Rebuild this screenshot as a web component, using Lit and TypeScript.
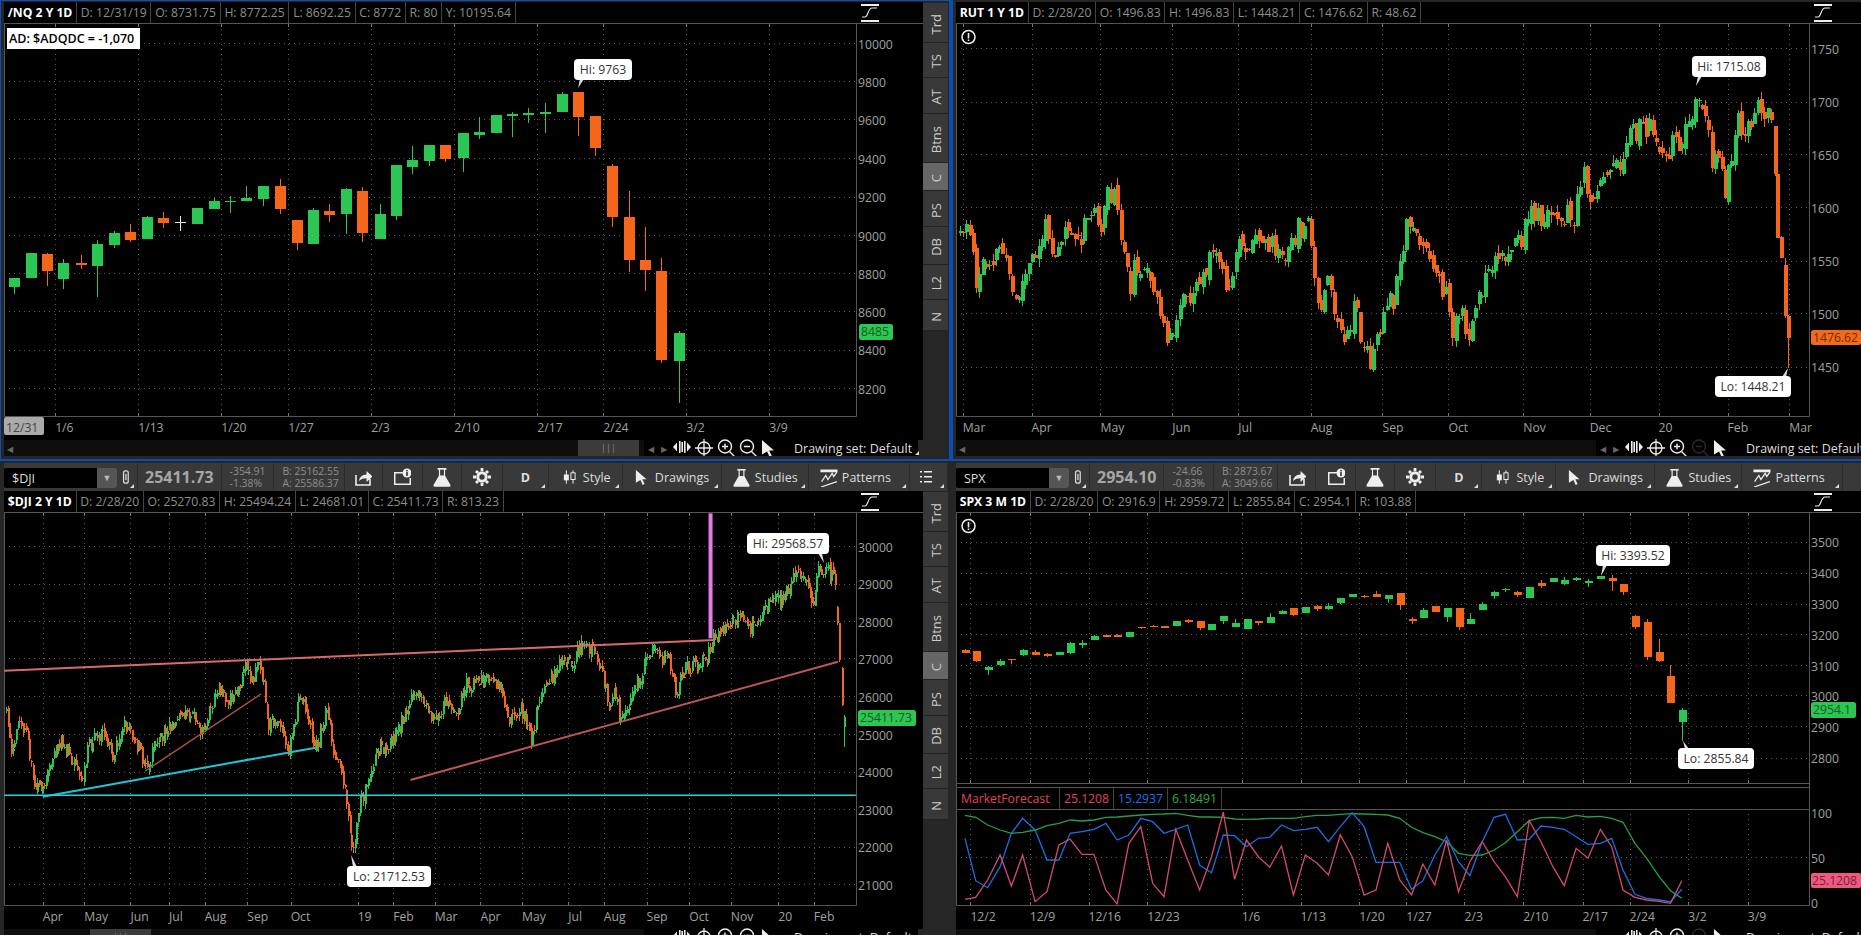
import { LitElement, html, svg, css, nothing } from "lit";
import { customElement, property } from "lit/decorators.js";

type Candle = [number, number, number, number, number, string];
const G = "#2bc653";
const O = "#f5661a";
const W = "#e6e6e6";

// seeded noise so the long charts stay the same between runs
function rng(seed: number) {
  return () => {
    seed = (seed + 0x6d2b79f5) | 0;
    let t = Math.imul(seed ^ (seed >>> 15), 1 | seed);
    t = (t + Math.imul(t ^ (t >>> 7), 61 | t)) ^ t;
    return ((t ^ (t >>> 14)) >>> 0) / 4294967296;
  };
}

function trace(way: number[][], step: number, seed: number, jitter: number, wick: number): Candle[] {
  const r = rng(seed);
  const out: Candle[] = [];
  let seg = 0;
  const last = way[way.length - 1][0];
  let prev = way[0][1];
  for (let x = way[0][0]; x <= last; x += step) {
    while (seg < way.length - 2 && way[seg + 1][0] < x) seg++;
    const [x0, y0] = way[seg];
    const [x1, y1] = way[seg + 1];
    const y = y0 + ((y1 - y0) * (x - x0)) / (x1 - x0) + (r() - 0.5) * jitter;
    const open = prev + (r() - 0.5) * jitter * 0.4;
    const top = Math.min(open, y);
    const bot = Math.max(open, y);
    out.push([x, top - r() * wick, top, Math.max(bot, top + 4), bot + r() * wick, y < open ? G : O]);
    prev = y;
  }
  return out;
}

const nqCandles: Candle[] = [
  [24, 830, 831, 858, 878, G], [52, 756, 756, 831, 831, G], [80, 755, 759, 810, 855, O], [107, 775, 786, 834, 863, G],
  [136, 763, 786, 792, 803, O], [164, 718, 729, 795, 887, G], [192, 690, 696, 732, 740, G], [220, 670, 693, 717, 722, O],
  [247, 645, 648, 714, 714, G], [275, 633, 651, 666, 682, O], [304, 645, 663, 665, 690, W], [332, 621, 621, 669, 669, G],
  [360, 590, 600, 624, 624, G], [387, 585, 600, 603, 635, G], [415, 555, 591, 600, 600, G], [444, 555, 555, 594, 615, G],
  [472, 535, 555, 624, 638, O], [500, 657, 657, 726, 746, O], [527, 621, 627, 729, 729, G], [555, 610, 630, 642, 662, O],
  [584, 562, 564, 639, 700, G], [611, 558, 570, 696, 722, O], [640, 610, 639, 714, 714, G], [667, 491, 491, 645, 658, G],
  [695, 435, 477, 498, 518, G], [724, 432, 432, 480, 495, G], [751, 432, 432, 474, 483, O], [780, 395, 396, 471, 512, G],
  [808, 348, 393, 402, 413, G], [836, 342, 342, 396, 396, G], [864, 333, 339, 345, 407, G], [891, 322, 336, 342, 365, G],
  [919, 305, 333, 339, 395, G], [948, 272, 279, 333, 333, G], [975, 272, 272, 348, 405, O], [1004, 345, 345, 441, 465, O],
  [1031, 490, 495, 648, 678, O], [1060, 570, 648, 777, 812, O], [1088, 678, 777, 807, 870, O], [1115, 771, 810, 1077, 1085, O],
  [1144, 990, 996, 1080, 1205, G],
];

const spxCandles: Candle[] = [
  [59, 568, 570, 578, 580, O], [77, 573, 573, 603, 605, O], [97, 618, 620, 630, 645, G], [118, 598, 603, 615, 617, G],
  [137, 597, 597, 600, 612, O], [156, 568, 570, 585, 587, G], [177, 571, 576, 584, 586, O], [197, 578, 582, 587, 592, O],
  [217, 576, 577, 585, 586, G], [236, 545, 550, 579, 581, G], [256, 540, 550, 554, 564, G], [276, 526, 529, 540, 541, G],
  [296, 524, 526, 530, 531, O], [315, 523, 526, 530, 531, O], [335, 516, 517, 530, 531, G], [355, 500, 502, 504, 507, O],
  [375, 496, 498, 500, 502, O], [394, 497, 499, 503, 504, O], [414, 483, 484, 498, 499, G], [434, 478, 479, 486, 488, O],
  [454, 483, 484, 504, 510, O], [474, 492, 493, 510, 511, G], [494, 468, 469, 484, 492, G], [513, 477, 490, 501, 502, G],
  [533, 477, 478, 507, 508, G], [553, 482, 484, 490, 494, O], [572, 460, 472, 488, 490, G], [592, 451, 453, 461, 463, G],
  [612, 444, 444, 465, 467, O], [632, 441, 442, 459, 460, G], [652, 436, 439, 448, 452, O], [671, 430, 439, 447, 449, G],
  [691, 413, 415, 429, 431, G], [711, 401, 402, 411, 412, G], [731, 404, 407, 410, 414, O], [751, 393, 402, 411, 412, O],
  [771, 404, 406, 416, 430, G], [791, 399, 399, 435, 449, O], [811, 472, 478, 484, 491, O], [830, 445, 450, 474, 475, G],
  [850, 437, 438, 456, 457, O], [870, 444, 445, 471, 485, G], [890, 444, 444, 500, 509, O], [909, 460, 477, 492, 493, G],
  [930, 425, 432, 450, 451, G], [950, 394, 397, 408, 418, G], [969, 384, 387, 390, 396, G], [989, 392, 396, 405, 410, O],
  [1009, 380, 381, 414, 415, G], [1029, 360, 369, 378, 384, O], [1049, 353, 354, 366, 367, G], [1068, 352, 361, 372, 374, G],
  [1088, 352, 354, 359, 362, G], [1108, 356, 364, 369, 380, G], [1129, 347, 348, 356, 358, G], [1148, 345, 354, 362, 392, O],
  [1167, 371, 372, 396, 404, O], [1187, 466, 468, 500, 508, O], [1207, 478, 485, 591, 600, O], [1228, 538, 576, 603, 607, O],
  [1247, 616, 648, 728, 730, O], [1266, 745, 750, 786, 842, G],
];

const rutWay = [
  [50, 690], [60, 650], [68, 720], [78, 860], [88, 790], [105, 765], [120, 730], [130, 790], [142, 915], [155, 850], [175, 760],
  [195, 680], [210, 745], [232, 670], [250, 740], [265, 660], [280, 620], [290, 695], [300, 570], [312, 600], [322, 710], [335, 860],
  [350, 770], [365, 830], [378, 900], [395, 970], [408, 1050], [420, 900], [435, 880], [455, 830], [470, 790], [483, 740], [495, 860],
  [507, 880], [520, 720], [540, 740], [570, 720], [600, 790], [615, 690], [636, 680], [645, 790], [655, 970], [670, 840], [685, 960],
  [698, 1065], [715, 910], [730, 1050], [745, 1080], [760, 950], [780, 900], [790, 830], [800, 690], [815, 680], [830, 740], [850, 830],
  [870, 880], [880, 1000], [893, 930], [903, 1020], [918, 920], [935, 850], [945, 810], [965, 770], [985, 700], [998, 740], [1005, 620],
  [1025, 640], [1048, 660], [1070, 630], [1082, 665], [1092, 550], [1102, 520], [1115, 590], [1125, 590], [1135, 510], [1155, 510],
  [1170, 440], [1185, 400], [1200, 370], [1210, 370], [1222, 420], [1238, 450], [1260, 420], [1277, 360], [1285, 305], [1290, 270],
  [1298, 345], [1310, 345], [1316, 470], [1328, 450], [1338, 570], [1345, 510], [1352, 430], [1360, 350], [1370, 440], [1378, 370],
  [1390, 330], [1410, 320], [1420, 378],
];
const rutTail: Candle[] = [
  [1423, 375, 375, 520, 525, O], [1427, 518, 520, 710, 712, O], [1433, 705, 707, 770, 772, O],
  [1439, 770, 792, 945, 950, O], [1445, 942, 946, 1012, 1100, O],
];

const djiWay = [
  [10, 760], [18, 880], [32, 780], [45, 830], [55, 960], [72, 990], [80, 920], [105, 845], [125, 900], [135, 970], [150, 850], [170, 820],
  [190, 890], [210, 780], [225, 830], [245, 925], [270, 830], [300, 770], [320, 760], [340, 815], [365, 695], [385, 725], [405, 680],
  [412, 625], [425, 660], [433, 610], [445, 670], [452, 800], [465, 770], [485, 880], [505, 690], [520, 780], [530, 890], [550, 730],
  [560, 870], [575, 920], [585, 1050], [595, 1170], [605, 1040], [612, 1010], [625, 940], [640, 860], [655, 860], [675, 790], [695, 715],
  [710, 700], [735, 790], [755, 710], [770, 770], [785, 670], [800, 680], [830, 640], [850, 720], [860, 780], [880, 750], [895, 850],
  [910, 700], [930, 660], [940, 620], [965, 600], [980, 555], [1005, 575], [1020, 680], [1025, 760], [1035, 670], [1045, 780], [1060, 740],
  [1075, 660], [1085, 620], [1095, 570], [1110, 590], [1130, 610], [1140, 700], [1155, 620], [1175, 615], [1195, 580], [1205, 530],
  [1225, 490], [1245, 470], [1265, 500], [1285, 450], [1300, 420], [1320, 410], [1345, 335], [1360, 375], [1370, 460], [1378, 340],
  [1392, 320], [1408, 370],
];
const djiTail: Candle[] = [
  [1412, 438, 440, 490, 495, O], [1415, 488, 490, 600, 605, O], [1419, 622, 625, 735, 738, O], [1423, 765, 770, 800, 860, G],
];

const mfRed = [[59, 1318], [77, 1312], [97, 1260], [118, 1185], [137, 1278], [156, 1185], [177, 1325], [197, 1295], [217, 1155], [236, 1137], [256, 1183], [276, 1183], [296, 1290], [315, 1332], [335, 1150], [355, 1100], [375, 1270], [394, 1310], [414, 1108], [434, 1200], [454, 1290], [474, 1190], [494, 1056], [513, 1258], [533, 1140], [553, 1190], [572, 1222], [592, 1158], [612, 1305], [632, 1185], [652, 1210], [671, 1245], [691, 1125], [711, 1190], [731, 1305], [751, 1290], [771, 1150], [791, 1260], [811, 1305], [830, 1212], [850, 1275], [870, 1140], [890, 1295], [909, 1205], [930, 1145], [950, 1205], [969, 1250], [989, 1310], [1009, 1082], [1029, 1145], [1049, 1220], [1068, 1277], [1088, 1165], [1108, 1195], [1129, 1108], [1148, 1160], [1167, 1290], [1187, 1312], [1207, 1320], [1228, 1324], [1247, 1330], [1266, 1262]];
const mfBlue = [[59, 1135], [77, 1262], [97, 1283], [118, 1220], [137, 1120], [156, 1075], [177, 1110], [197, 1200], [217, 1200], [236, 1120], [256, 1115], [276, 1108], [296, 1090], [315, 1140], [335, 1125], [355, 1075], [375, 1085], [394, 1120], [414, 1108], [434, 1095], [454, 1215], [474, 1238], [494, 1125], [513, 1127], [533, 1160], [553, 1135], [572, 1132], [592, 1095], [612, 1112], [632, 1108], [652, 1102], [671, 1145], [691, 1100], [711, 1058], [731, 1100], [751, 1207], [771, 1207], [791, 1207], [811, 1288], [830, 1262], [850, 1185], [870, 1130], [890, 1205], [909, 1247], [930, 1145], [950, 1072], [969, 1063], [989, 1140], [1009, 1138], [1029, 1098], [1049, 1102], [1068, 1108], [1088, 1130], [1108, 1153], [1129, 1150], [1148, 1135], [1167, 1230], [1187, 1303], [1207, 1315], [1228, 1320], [1247, 1325], [1266, 1288]];
const mfGreen = [[59, 1066], [77, 1072], [97, 1095], [118, 1110], [137, 1120], [156, 1117], [177, 1110], [197, 1097], [217, 1090], [236, 1080], [256, 1083], [276, 1080], [296, 1072], [315, 1071], [335, 1068], [355, 1065], [375, 1063], [394, 1062], [414, 1060], [434, 1066], [454, 1071], [474, 1071], [494, 1072], [513, 1077], [533, 1078], [553, 1077], [572, 1075], [592, 1075], [612, 1075], [632, 1070], [652, 1066], [671, 1066], [691, 1063], [711, 1061], [731, 1062], [751, 1063], [771, 1065], [791, 1075], [811, 1102], [830, 1118], [850, 1130], [870, 1145], [890, 1180], [909, 1186], [930, 1185], [950, 1170], [969, 1148], [989, 1115], [1009, 1082], [1029, 1073], [1049, 1072], [1068, 1075], [1088, 1066], [1108, 1071], [1129, 1069], [1148, 1075], [1167, 1087], [1187, 1150], [1207, 1195], [1228, 1250], [1247, 1292], [1266, 1315]];

// charts are read off the zoomed reference: x = ox + zx / sx, y = oy + zy / 3
const PANELS: any[] = [
  {
    ox: 0, oy: 0, sx: 1.686, plot: [4, 23, 856, 415], width: 919, tabs: true, thumb: 578,
    cells: ["/NQ 2 Y 1D", "D: 12/31/19", "O: 8731.75", "H: 8772.25", "L: 8692.25", "C: 8772", "R: 80", "Y: 10195.64"],
    prices: [["10000", 130], ["9800", 244], ["9600", 358], ["9400", 475], ["9200", 590], ["9000", 705], ["8800", 820], ["8600", 934], ["8400", 1049], ["8200", 1164]],
    dates: [["1/6", 93], ["1/13", 233], ["1/20", 373], ["1/27", 486], ["2/3", 626], ["2/10", 766], ["2/17", 906], ["2/24", 1017], ["3/2", 1157], ["3/9", 1297]],
    candles: nqCandles, bodyW: 11,
    badge: { text: "8485", x: 859, y: 323, w: 34, h: 16, bg: "#2fc552", fg: "#0d5a22" },
    callouts: [{ text: "Hi: 9763", x: 574, y: 58, w: 58, h: 21, px: 578, py: 87 }],
    dateBox: "12/31", adLabel: "AD: $ADQDC = -1,070",
  },
  {
    ox: 930, oy: 0, sx: 1.684, plot: [956, 23, 1809, 415], width: 905, warn: 108,
    cells: ["RUT 1 Y 1D", "D: 2/28/20", "O: 1496.83", "H: 1496.83", "L: 1448.21", "C: 1476.62", "R: 48.62"],
    prices: [["1750", 145], ["1700", 305], ["1650", 463], ["1600", 622], ["1550", 782], ["1500", 940], ["1450", 1100]],
    dates: [["Mar", 55], ["Apr", 171], ["May", 287], ["Jun", 408], ["Jul", 519], ["Aug", 641], ["Sep", 762], ["Oct", 873], ["Nov", 999], ["Dec", 1111], ["20", 1227], ["Feb", 1343], ["Mar", 1447]],
    candles: [...trace(rutWay, 5.53, 11, 76, 24), ...rutTail], bodyW: 4,
    badge: { text: "1476.62", x: 1811, y: 329, w: 50, h: 15, bg: "#f26a1c", fg: "#6e2b00" },
    callouts: [
      { text: "Hi: 1715.08", x: 1692, y: 55, w: 74, h: 21, px: 1696, py: 85 },
      { text: "Lo: 1448.21", x: 1715, y: 375, w: 76, h: 21, px: 1788, py: 367 },
    ],
    dimZoom: true,
  },
  {
    ox: 0, oy: 460, sx: 1.686, plot: [4, 513, 856, 905], width: 919, tabs: true, thumb: 90,
    bar: { sym: "$DJI", last: "25411.73", chg: "-354.91", pct: "-1.38%", bid: "B: 25162.55", ask: "A: 25586.37", list: true },
    cells: ["$DJI 2 Y 1D", "D: 2/28/20", "O: 25270.83", "H: 25494.24", "L: 24681.01", "C: 25411.73", "R: 813.23"],
    prices: [["30000", 262], ["29000", 374], ["28000", 487], ["27000", 597], ["26000", 712], ["25000", 826], ["24000", 938], ["23000", 1050], ["22000", 1163], ["21000", 1276]],
    dates: [["Apr", 72], ["May", 142], ["Jun", 220], ["Jul", 285], ["Aug", 345], ["Sep", 417], ["Oct", 490], ["19", 603], ["Feb", 663], ["Mar", 733], ["Apr", 810], ["May", 880], ["Jul", 958], ["Aug", 1018], ["Sep", 1090], ["Oct", 1162], ["Nov", 1232], ["20", 1312], ["Feb", 1372]],
    candles: [...trace(djiWay, 2.8, 29, 46, 16), ...djiTail], bodyW: 2,
    lines: [
      { a: [7, 632], b: [1205, 540], c: "#d86a6a", w: 2 },
      { a: [692, 960], b: [1413, 605], c: "#bd5656", w: 2 },
      { a: [245, 933], b: [440, 702], c: "#a84e4e", w: 1.5 },
      { a: [72, 1010], b: [532, 863], c: "#20c4d6", w: 2 },
      { a: [7, 1006], b: [1443, 1006], c: "#25d5e0", w: 1.5 },
      { a: [1198, 160], b: [1198, 535], c: "#e37fe3", w: 4 },
    ],
    badge: { text: "25411.73", x: 858, y: 710, w: 58, h: 16, bg: "#2fc552", fg: "#0d5a22" },
    callouts: [
      { text: "Hi: 29568.57", x: 747, y: 533, w: 82, h: 21, px: 824, py: 563 },
      { text: "Lo: 21712.53", x: 347, y: 866, w: 84, h: 21, px: 351, py: 855 },
    ],
  },
  {
    ox: 930, oy: 460, sx: 1.684, plot: [956, 513, 1809, 783], width: 905, warn: 198, study: true,
    bar: { sym: "SPX", last: "2954.10", chg: "-24.66", pct: "-0.83%", bid: "B: 2873.67", ask: "A: 3049.66" },
    cells: ["SPX 3 M 1D", "D: 2/28/20", "O: 2916.9", "H: 2959.72", "L: 2855.84", "C: 2954.1", "R: 103.88"],
    prices: [["3500", 248], ["3400", 341], ["3300", 434], ["3200", 526], ["3100", 619], ["3000", 709], ["2900", 802], ["2800", 896]],
    dates: [["12/2", 68], ["12/9", 168], ["12/16", 267], ["12/23", 366], ["1/6", 525], ["1/13", 624], ["1/20", 723], ["1/27", 802], ["2/3", 900], ["2/10", 999], ["2/17", 1099], ["2/24", 1178], ["3/2", 1277], ["3/9", 1377]],
    candles: spxCandles, bodyW: 8,
    badge: { text: "2954.1", x: 1811, y: 702, w: 45, h: 16, bg: "#2fc552", fg: "#0d5a22" },
    callouts: [
      { text: "Hi: 3393.52", x: 1596, y: 545, w: 74, h: 21, px: 1601, py: 576 },
      { text: "Lo: 2855.84", x: 1678, y: 748, w: 76, h: 21, px: 1683, py: 741 },
    ],
    dimZoom: true,
  },
];

const corner = html`<i class="corner"></i>`;

const icons: Record<string, any> = {
  chain: svg`<rect x="2" y="1" width="6" height="16" rx="2.5" fill="none" stroke="#ddd" stroke-width="1.6"/><rect x="4.2" y="5" width="1.6" height="8" fill="#ddd"/>`,
  share: svg`<path d="M2 7v10h14v-6" fill="none" stroke="#eee" stroke-width="1.6"/><path d="M5 13c.6-4 3.4-6.4 7.5-6.5V3l6 5.5-6 5.5v-3.7c-3 0-5.4.7-7.5 2.7z" fill="#eee"/>`,
  note: svg`<path d="M1 4h10v1.5H2.5V15.5h14V10H18v7H1z" fill="#eee"/><circle cx="14" cy="5" r="4.5" fill="#eee"/><rect x="13.2" y="4" width="1.6" height="4" fill="#333"/><rect x="13.2" y="2" width="1.6" height="1.4" fill="#333"/>`,
  flask: svg`<path d="M5 1h8v1.4h-1.2v5.4l4.7 8.2c.5 1 0 1.8-1 1.8H2.5c-1 0-1.5-.8-1-1.8l4.7-8.2V2.4H5z" fill="#eee"/><rect x="7.3" y="2.4" width="3.4" height="5.2" fill="#393939"/>`,
  gear: svg`<circle cx="9" cy="9" r="4.2" fill="none" stroke="#eee" stroke-width="3"/><path d="M7.6 0h2.8v3H7.6zM7.6 15h2.8v3H7.6zM0 7.6h3v2.8H0zM15 7.6h3v2.8h-3zM2 4l2-2 2 2-2 2zM12 14l2-2 2 2-2 2zM2 14l2-2 2 2-2 2zM12 4l2-2 2 2-2 2z" fill="#eee"/>`,
  style: svg`<path d="M4 1v16M12 1v16" stroke="#eee" stroke-width="1.2"/><rect x="1" y="6" width="6" height="7" fill="#eee"/><rect x="9.5" y="4" width="5" height="8" fill="#393939" stroke="#eee" stroke-width="1.2"/>`,
  cursor: svg`<path d="M1 1l12 10.5H8.2l2.6 5.5-2.2 1-2.5-5.6L1 15.5z" fill="#eee"/>`,
  pattern: svg`<path d="M1 2h15v1.5H1zM1 18l15-5" stroke="#eee" stroke-width="1.2" fill="#eee"/><path d="M1.5 13l4-6 2 4 4-6 1.5 3 3-4" fill="none" stroke="#eee" stroke-width="1.2"/>`,
  list: svg`<path d="M1 3h2v1.6H1zM5 3h8v1.6H5zM1 8h2v1.6H1zM5 8h8v1.6H5zM1 13h2v1.6H1zM5 13h8v1.6H5z" fill="#eee"/>`,
  move: svg`<path d="M0 8l4-4.5v9zM18 8l-4-4.5v9z" fill="#eee"/><path d="M6 2h1.6v12H6zM8.4 3h1.6v10H8.4zM11 2h1.6v12H11z" fill="#eee"/>`,
  cross: svg`<circle cx="9" cy="9" r="6" fill="none" stroke="#eee" stroke-width="1.3"/><path d="M9 0v18M0 9h18" stroke="#eee" stroke-width="1.3"/>`,
  zoomIn: svg`<circle cx="8" cy="7.5" r="6.5" fill="none" stroke="#eee" stroke-width="1.4"/><path d="M8 4.5v6M5 7.5h6M12.5 12.5l5 5" stroke="#eee" stroke-width="1.4"/>`,
  zoomOut: svg`<circle cx="8" cy="7.5" r="6.5" fill="none" stroke="#eee" stroke-width="1.4"/><path d="M5 7.5h6M12.5 12.5l5 5" stroke="#eee" stroke-width="1.4"/>`,
  zoomOutDim: svg`<circle cx="8" cy="7.5" r="6.5" fill="none" stroke="#2a2a2a" stroke-width="1.4"/><path d="M5 7.5h6M12.5 12.5l5 5" stroke="#2a2a2a" stroke-width="1.4"/>`,
  mode: svg`<path d="M0 1h18M0 17h18" stroke="#eee" stroke-width="2" fill="none"/><path d="M1 13h3c3 0 3-9 7-9h5" stroke="#eee" stroke-width="1.1" fill="none"/>`,
};

const icon = (name: string, w = 18, h = 18) =>
  html`<svg class="ico" width=${w} height=${h} viewBox="0 0 18 18">${icons[name]}</svg>`;

const TABS: [string, number][] = [["Trd", 40], ["TS", 35], ["AT", 36], ["Btns", 49], ["C", 28], ["PS", 36], ["DB", 38], ["L2", 35], ["N", 31]];
const AXIS_SIZE = "12.2";

@customElement("chart-panel")
export class ChartPanel extends LitElement {
  static styles = css`
    :host { display: block; font-family: "Open Sans", sans-serif; color: #999; height: 100%; overflow: hidden; }
    .toolbar { display: flex; height: 28px; background: #393939; align-items: stretch; font-size: 12.5px; color: #ddd; }
    .sym-box { width: 113px; height: 20px; margin-top: 5px; background: #000; border-radius: 2px; display: flex; align-items: center; justify-content: space-between; padding-left: 8px; box-sizing: border-box; flex: none; }
    .drop { width: 20px; height: 20px; background: #555; color: #bbb; font-size: 9px; line-height: 20px; text-align: center; border-radius: 0 2px 2px 0; }
    .cell { position: relative; display: flex; align-items: center; border-right: 1px solid #2b2b2b; box-sizing: border-box; flex: none; }
    .chain { width: 21px; padding-left: 5px; }
    .last { font-size: 16px; font-weight: 700; color: #a6a6a6; padding: 0 7px; }
    .two { display: grid; align-content: center; font-size: 10.4px; line-height: 12px; color: #8f8f8f; padding: 0 8px; }
    .two.quote { padding-right: 5px; }
    .btn { justify-content: center; }
    .b38 { width: 38px; } .b39 { width: 39px; } .b40 { width: 40px; } .b41 { width: 41px; } .b46 { width: 46px; }
    .s1 { width: 74px; padding-left: 14px; gap: 5px; }
    .s2 { width: 99px; padding-left: 12px; gap: 4px; }
    .s3 { width: 87px; padding-left: 10px; gap: 4px; }
    .s4 { width: 101px; padding-left: 11px; gap: 3px; }
    .corner { position: absolute; right: 3px; bottom: 3px; width: 0; height: 0; border-left: 4px solid transparent; border-bottom: 4px solid #ddd; }
    .main { display: flex; align-items: stretch; }
    .content { flex: none; overflow: hidden; }
    .hdr { display: flex; height: 21px; border-bottom: 1px solid #555; font-size: 12.2px; line-height: 21px; color: #8e8e8e; background: #000; }
    .hdr span { padding: 0 3.7px; border-right: 1px solid #444; white-space: nowrap; }
    .hdr span:first-child { color: #fff; font-weight: 700; }
    .mode { margin-left: auto; margin-top: 2px; flex: none; }
    svg.chart { display: block; background: #000; }
    svg.chart text { font-family: "Open Sans", sans-serif; }
    .foot { display: flex; align-items: center; height: 16px; width: 914px; background: #000; font-size: 12.5px; color: #ddd; }
    .track { width: 640px; height: 16px; background: #0e0e0e; display: flex; align-items: stretch; flex: none; position: relative; }
    .larr { position: absolute; left: 3px; top: 3px; color: #666; font-size: 8px; }
    .thumb { width: 61px; background: #3b3b3b; color: #888; font-size: 9px; text-align: center; line-height: 16px; }
    .arrows { width: 27px; color: #666; font-size: 8px; display: flex; justify-content: space-around; flex: none; }
    .ico-wrap { width: 22px; display: flex; justify-content: center; flex: none; }
    .ds { position: relative; margin-left: 13px; padding-right: 7px; white-space: nowrap; flex: none; }
    .ds .corner { right: 0; bottom: 2px; }
    .tabs { width: 25px; flex: none; display: flex; flex-direction: column; margin-top: 1px; }
    .tab { box-sizing: border-box; border-bottom: 1px solid #222; background: #383838; display: flex; align-items: center; justify-content: center; color: #ccc; font-size: 13px; padding-top: 3px; }
    .tab.on { background: #666; }
    .tab b { font-weight: 400; writing-mode: vertical-rl; transform: rotate(180deg); }
    .ico { display: block; }
  `;

  @property({ attribute: false }) cfg: any;

  private toolbar(b: any) {
    return html`<div class="toolbar">
      <div class="sym-box"><span>${b.sym}</span><span class="drop">&#9660;</span></div>
      <div class="cell chain">${icon("chain", 14, 18)}${corner}</div>
      <div class="cell last">${b.last}</div>
      <div class="cell two"><span>${b.chg}</span><span>${b.pct}</span></div>
      <div class="cell two quote"><span>${b.bid}</span><span>${b.ask}</span></div>
      <div class="cell btn b38">${icon("share")}</div>
      <div class="cell btn b40">${icon("note")}</div>
      <div class="cell btn b39">${icon("flask", 20, 20)}</div>
      <div class="cell btn b41">${icon("gear")}</div>
      <div class="cell btn b46"><b>D</b>${corner}</div>
      <div class="cell s1">${icon("style", 15, 18)}Style${corner}</div>
      <div class="cell s2">${icon("cursor", 16, 18)}Drawings${corner}</div>
      <div class="cell s3">${icon("flask", 19, 19)}Studies${corner}</div>
      <div class="cell s4">${icon("pattern", 19, 19)}Patterns${corner}</div>
      ${b.list ? html`<div class="cell btn b38">${icon("list")}${corner}</div>` : nothing}
    </div>`;
  }

  private candles(c: any) {
    const X = (x: number) => c.ox + x / c.sx;
    const Y = (y: number) => c.oy + y / 3;
    let wg = "", wo = "", ww = "";
    const bodies: any[] = [];
    const bw = c.bodyW;
    for (const [x, wt, bt, bb, wb, col] of c.candles as Candle[]) {
      const px = Math.round(X(x));
      const seg = `M${px + 0.5} ${Y(wt).toFixed(1)}V${Y(wb).toFixed(1)}`;
      if (col === G) wg += seg;
      else if (col === O) wo += seg;
      else ww += seg;
      const h = Math.max(1, Y(bb) - Y(bt));
      bodies.push(svg`<rect x=${px - Math.floor(bw / 2) + (bw % 2 ? 0 : 1)} y=${Y(bt).toFixed(1)} width=${bw} height=${h.toFixed(1)} fill=${col}></rect>`);
    }
    return svg`<g shape-rendering="crispEdges">
      <path d=${wg} stroke=${G} fill="none"></path><path d=${wo} stroke=${O} fill="none"></path><path d=${ww} stroke=${W} fill="none"></path>
      ${bodies}
    </g>`;
  }

  private grid(c: any) {
    const [L, T, R, B] = c.plot;
    const X = (x: number) => Math.round(c.ox + x / c.sx) + 0.5;
    const Y = (y: number) => c.oy + y / 3;
    const out: any[] = [];
    for (const [, zy] of c.prices) {
      const y = Math.round(Y(zy)) - 0.5;
      out.push(svg`<path d="M${L} ${y}H${R}" stroke="#5a5a5a" stroke-dasharray="1 4"></path>`);
    }
    for (const [, zx] of c.dates) {
      out.push(svg`<path d="M${X(zx)} ${T}V${B}" stroke="#5a5a5a" stroke-dasharray="1 4"></path>`);
      out.push(svg`<path d="M${X(zx)} ${T}v3M${X(zx)} ${B - 3}v3" stroke="#777"></path>`);
      if (c.study) {
        out.push(svg`<path d="M${X(zx)} 809V905" stroke="#5a5a5a" stroke-dasharray="1 4"></path>`);
        out.push(svg`<path d="M${X(zx)} 902v3" stroke="#777"></path>`);
      }
    }
    return out;
  }

  private axis(c: any) {
    const R = c.plot[2];
    const Y = (y: number) => c.oy + y / 3;
    const X = (x: number) => c.ox + x / c.sx;
    const dateY = (c.study ? 905 : c.plot[3]) + 16;
    return [
      ...c.prices.map(([t, zy]: [string, number]) => svg`<text x=${R + 2} y=${Y(zy) + 4.5} font-size=${AXIS_SIZE} fill="#a0a0a0">${t}</text>`),
      ...c.dates.map(([t, zx]: [string, number]) => svg`<text x=${X(zx)} y=${dateY} font-size=${AXIS_SIZE} fill="#a0a0a0">${t}</text>`),
    ];
  }

  private study(c: any) {
    const [L, , R] = c.plot;
    const line = (pts: number[][], col: string) =>
      svg`<polyline fill="none" stroke=${col} stroke-width="1.3" points=${pts.map(([x, y]) => `${(c.ox + x / c.sx).toFixed(1)},${(c.oy + y / 3).toFixed(1)}`).join(" ")}></polyline>`;
    const cells: [string, string, number, number][] = [
      ["MarketForecast", "#e0455f", L, 1059],
      ["25.1208", "#e0455f", 1059, 1113],
      ["15.2937", "#1f6fe8", 1113, 1167],
      ["6.18491", "#2ea94b", 1167, 1221],
    ];
    return svg`
      <rect x=${L} y="783" width=${R - L} height="5" fill="#000"></rect>
      <path d="M${L} 783.5H${R}M${L} 787.5H${R}M${L} 809.5H${R}" stroke="#555"></path>
      ${cells.map(([t, col, a, b]) => svg`
        <text x=${a + 5} y="803" font-size="12.2" fill=${col}>${t}</text>
        <path d="M${b + 0.5} 788V809" stroke="#444"></path>`)}
      <path d="M${L} 857.5H${R}" stroke="#5a5a5a" stroke-dasharray="1 4"></path>
      ${line(mfGreen, "#2a9d46")}${line(mfBlue, "#1a6fe0")}${line(mfRed, "#d24b6c")}
      <text x=${R + 2} y="818" font-size=${AXIS_SIZE} fill="#a0a0a0">100</text>
      <text x=${R + 2} y="863" font-size=${AXIS_SIZE} fill="#a0a0a0">50</text>
      <text x=${R + 2} y="908" font-size=${AXIS_SIZE} fill="#a0a0a0">0</text>
      <rect x=${R + 2} y="873" width="50" height="15" rx="2" fill="#ee5a7f"></rect>
      <text x=${R + 3} y="885" font-size=${AXIS_SIZE} fill="#7a1c38">25.1208</text>
    `;
  }

  private marks(c: any) {
    const out: any[] = [];
    const X = (x: number) => c.ox + x / c.sx;
    const Y = (y: number) => c.oy + y / 3;
    for (const l of c.lines ?? []) {
      out.push(svg`<line x1=${X(l.a[0])} y1=${Y(l.a[1])} x2=${X(l.b[0])} y2=${Y(l.b[1])} stroke=${l.c} stroke-width=${l.w}></line>`);
    }
    for (const k of c.callouts) {
      const edge = k.py > k.y ? k.y + k.h - 1 : k.y + 1;
      const tipX = k.px > k.x + k.w / 2 ? k.px - 6 : k.px + 2;
      out.push(svg`<path d="M${k.px} ${k.py}L${tipX + 4} ${edge}H${tipX}z" fill="#ddd"></path>
        <rect x=${k.x} y=${k.y} width=${k.w} height=${k.h} rx="4" fill="#fff"></rect>
        <text x=${k.x + k.w / 2} y=${k.y + 15} text-anchor="middle" font-size=${AXIS_SIZE} fill="#333">${k.text}</text>`);
    }
    const b = c.badge;
    out.push(svg`<rect x=${b.x} y=${b.y} width=${b.w} height=${b.h} rx="2.5" fill=${b.bg}></rect>
      <text x=${b.x + 2} y=${b.y + 12} font-size=${AXIS_SIZE} fill=${b.fg}>${b.text}</text>`);
    if (c.warn !== undefined) {
      const cy = Y(c.warn);
      const cx = c.plot[0] + 12.5;
      out.push(svg`<circle cx=${cx} cy=${cy} r="6.5" fill="none" stroke="#eee" stroke-width="1.5"></circle>
        <rect x=${cx - 0.8} y=${cy - 4} width="1.6" height="5.5" fill="#eee"></rect>
        <rect x=${cx - 0.8} y=${cy + 2.5} width="1.6" height="1.5" fill="#eee"></rect>`);
    }
    if (c.dateBox) {
      out.push(svg`<rect x="4" y="416" width="40" height="18" rx="2" fill="#aaa"></rect>
        <text x="6" y="431" font-size=${AXIS_SIZE} fill="#444">${c.dateBox}</text>`);
    }
    if (c.adLabel) {
      out.push(svg`<rect x="7" y="27" width="133" height="21" fill="#fff"></rect>
        <text x="9" y="42" font-size="12.5" font-weight="600" fill="#000">${c.adLabel}</text>`);
    }
    return out;
  }

  private foot(c: any) {
    return html`<div class="foot">
      <div class="track"><span class="larr">&#9664;</span>
        ${c.thumb ? html`<div class="thumb" style="margin-left:${c.thumb - 4}px">|||</div>` : nothing}
      </div>
      <div class="arrows"><span>&#9664;</span><span>&#9654;</span></div>
      <div class="ico-wrap">${icon("move")}</div>
      <div class="ico-wrap">${icon("cross")}</div>
      <div class="ico-wrap">${icon("zoomIn")}</div>
      <div class="ico-wrap">${icon(c.dimZoom ? "zoomOutDim" : "zoomOut")}</div>
      <div class="ico-wrap">${icon("cursor")}</div>
      <div class="ds">Drawing set: Default${corner}</div>
    </div>`;
  }

  render() {
    const c = this.cfg;
    const [L, T, R, B] = c.plot;
    const bottom = c.study ? 905 : B;
    const h = bottom + 24 - T;
    const modeGap = c.width - (R - L) - 23;
    return html`
      ${c.bar ? this.toolbar(c.bar) : nothing}
      <div class="main">
        <div class="content" style="width:${c.width}px">
          <div class="hdr">
            ${c.cells.map((t: string) => html`<span>${t}</span>`)}
            <svg class="mode" width="18" height="18" viewBox="0 0 18 18" style="margin-right:${modeGap}px">${icons.mode}</svg>
          </div>
          <svg class="chart" width=${c.width} height=${h} viewBox="${L} ${T} ${c.width} ${h}">
            ${this.grid(c)}
            ${c.study ? this.study(c) : nothing}
            <path d="M${L + 0.5} ${T}V${bottom + 0.5}H${R + 0.5}V${T}" fill="none" stroke="#555"></path>
            ${this.candles(c)}
            ${this.axis(c)}
            ${this.marks(c)}
          </svg>
          ${this.foot(c)}
        </div>
        ${c.tabs
          ? html`<div class="tabs">${TABS.map(([t, hh]) => html`<div class="tab ${t === "C" ? "on" : ""}" style="height:${hh}px"><b>${t}</b></div>`)}</div>`
          : nothing}
      </div>
    `;
  }
}

@customElement("app-root")
export class AppRoot extends LitElement {
  static styles = css`
    :host { display: grid; grid-template-columns: 951px 910px; grid-template-rows: 461px 474px; width: 1861px; height: 935px; background: #242424; overflow: hidden; }
    .c { box-sizing: border-box; overflow: hidden; min-width: 0; background: #262626; }
    .tl { padding: 1px 0 0 3px; border: solid #0c4db4; border-width: 1px 2px 2px 1px; }
    .tr { padding: 2px 0 0 3px; border: solid #0c4db4; border-width: 0 0 2px 2px; }
    .bl { padding: 2px 3px 0 4px; }
    .br { padding: 2px 0 0 5px; }
  `;
  render() {
    const [a, b, c, d] = PANELS;
    return html`
      <div class="c tl"><chart-panel .cfg=${a}></chart-panel></div>
      <div class="c tr"><chart-panel .cfg=${b}></chart-panel></div>
      <div class="c bl"><chart-panel .cfg=${c}></chart-panel></div>
      <div class="c br"><chart-panel .cfg=${d}></chart-panel></div>
    `;
  }
}
